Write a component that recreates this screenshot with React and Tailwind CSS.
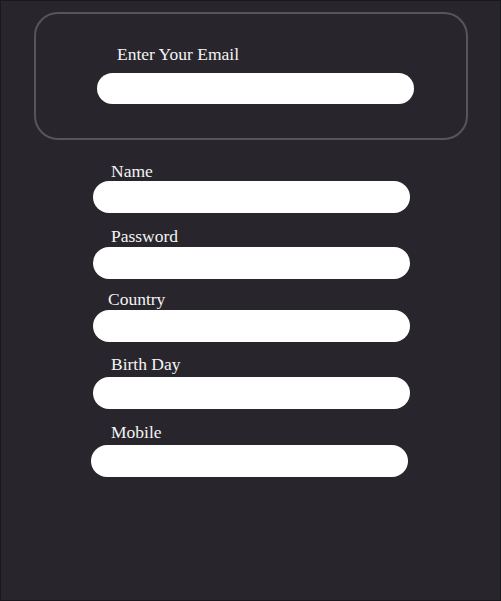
import React from "react";

const fields = [
  { label: "Name", type: "text", wrap: "mt-[21px]", labelCls: "ml-[110px]", inputCls: "mt-0 ml-[92px]" },
  { label: "Password", type: "password", wrap: "mt-[13px]", labelCls: "ml-[110px]", inputCls: "mt-[1px] ml-[92px]" },
  { label: "Country", type: "text", wrap: "mt-[10px]", labelCls: "ml-[107px]", inputCls: "mt-[1px] ml-[92px]" },
  { label: "Birth Day", type: "text", wrap: "mt-[12px]", labelCls: "ml-[110px]", inputCls: "mt-[3px] ml-[92px]" },
  { label: "Mobile", type: "tel", wrap: "mt-[13px]", labelCls: "ml-[110px]", inputCls: "mt-[3px] ml-[90px]" },
];

export default function App() {
  return (
    <div className="w-[501px] h-[601px] overflow-hidden border border-[#19181c] bg-[#28262c] text-[#f4f4f4] font-['Liberation_Serif',serif]">
      {/* Email */}
      <div className="mt-[11px] ml-[33px] w-[434px] rounded-[24px] border-2 border-[#55565a] pt-[28px] pb-[34px]">
        <label className="block ml-[81px] text-[17.5px] leading-6">Enter Your Email</label>
        <input
          type="email"
          className="block mt-[7px] ml-[61px] w-[317px] h-[31px] rounded-full bg-white outline-none px-4 text-black"
        />
      </div>

      {/* Formulaire */}
      {fields.map((f) => (
        <div key={f.label} className={f.wrap}>
          <label className={`block text-[17.5px] leading-5 ${f.labelCls}`}>{f.label}</label>
          <input
            type={f.type}
            className={`block w-[317px] h-8 rounded-full bg-white outline-none px-4 text-black ${f.inputCls}`}
          />
        </div>
      ))}
    </div>
  );
}
